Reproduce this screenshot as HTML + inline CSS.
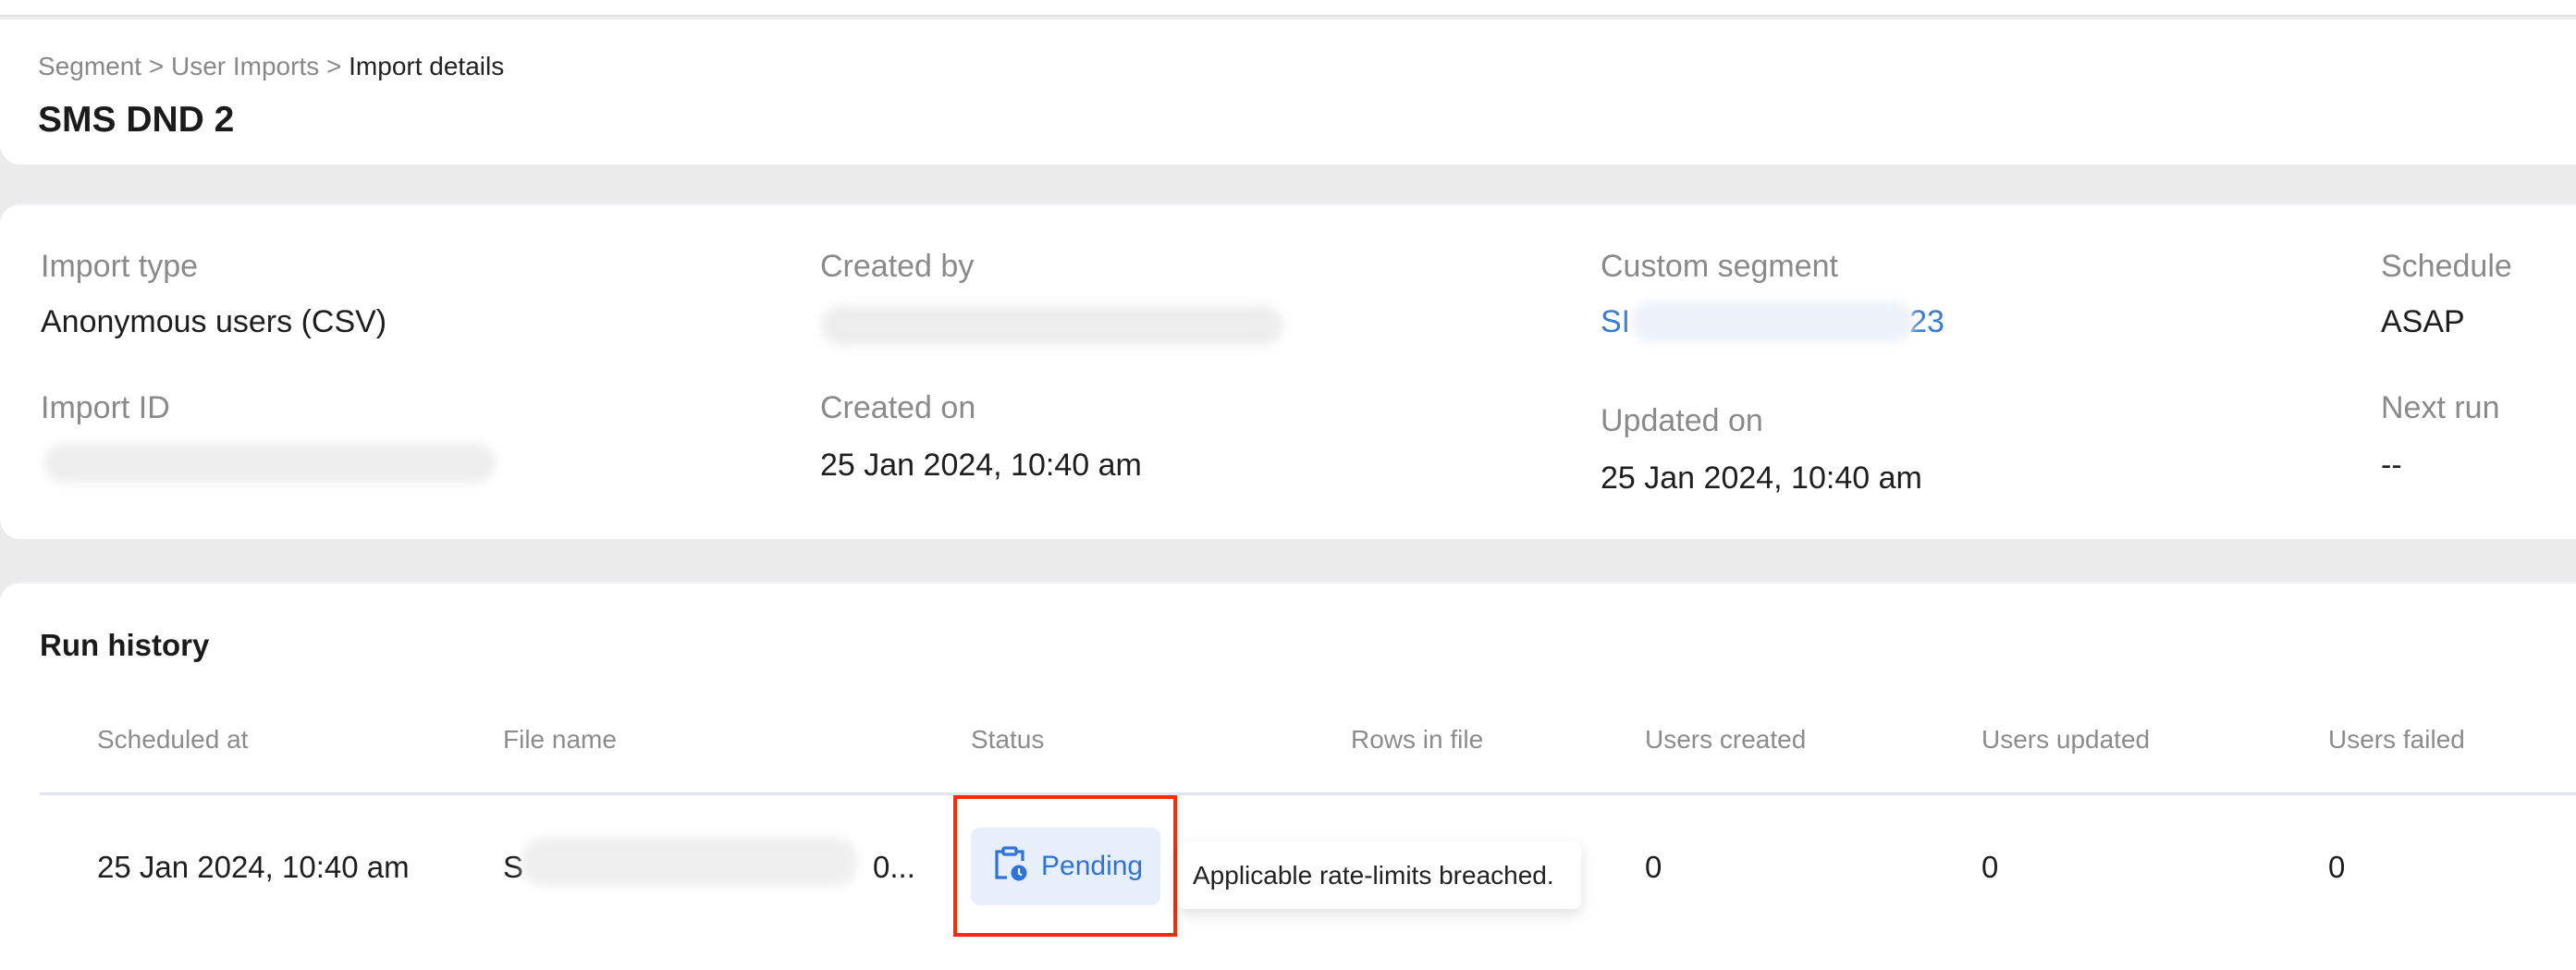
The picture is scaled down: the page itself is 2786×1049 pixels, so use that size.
<!DOCTYPE html>
<html><head><meta charset="utf-8"><style>
*{margin:0;padding:0;box-sizing:border-box}
body{width:2786px;height:1038px;background:#ebebeb;font-family:"Liberation Sans",sans-serif;position:relative;overflow:hidden}
.a{position:absolute;white-space:nowrap}
.card{position:absolute;background:#fff;left:0;right:0}
.lbl{color:#8a8a8a;font-size:34px;line-height:34px}
.val{color:#1e1e1e;font-size:34px;line-height:34px}
.th{color:#8c8c8c;font-size:28px;line-height:28px}
.td{color:#1e1e1e;font-size:33px;line-height:33px}
.blur{position:absolute;background:#eeeeee;border-radius:22px;filter:blur(5px)}
</style></head><body>
<div class="card" style="top:0;height:18px;border-bottom:2px solid #e2e2e2"></div>
<div class="card" style="top:21px;height:157px;border-radius:0 0 0 22px"></div>
<div class="a" style="left:41px;top:57px;font-size:28px;line-height:29px;color:#888">Segment &gt; User Imports &gt; <span style="color:#222">Import details</span></div>
<div class="a" style="left:41px;top:110px;font-size:39px;line-height:40px;font-weight:bold;color:#1b1b1b">SMS DND 2</div>

<div class="card" style="top:220px;height:363px;border-radius:22px 0 0 22px;border-top:2px solid #f0f2f8"></div>
<div class="a lbl" style="left:44px;top:271px">Import type</div>
<div class="a val" style="left:44px;top:331px">Anonymous users (CSV)</div>
<div class="a lbl" style="left:44px;top:424px">Import ID</div>
<div class="blur" style="left:48px;top:480px;width:488px;height:42px"></div>

<div class="a lbl" style="left:887px;top:271px">Created by</div>
<div class="blur" style="left:888px;top:330px;width:500px;height:44px"></div>
<div class="a lbl" style="left:887px;top:424px">Created on</div>
<div class="a val" style="left:887px;top:486px">25 Jan 2024, 10:40 am</div>

<div class="a lbl" style="left:1731px;top:271px">Custom segment</div>
<div class="a val" style="left:1731px;top:331px;color:#3a7bd5">SI<span style="display:inline-block;width:302px"></span>23</div>
<div class="blur" style="left:1764px;top:326px;width:306px;height:44px;background:#edf2fa"></div>
<div class="a lbl" style="left:1731px;top:438px">Updated on</div>
<div class="a val" style="left:1731px;top:500px">25 Jan 2024, 10:40 am</div>

<div class="a lbl" style="left:2575px;top:271px">Schedule</div>
<div class="a val" style="left:2575px;top:331px">ASAP</div>
<div class="a lbl" style="left:2575px;top:424px">Next run</div>
<div class="a val" style="left:2575px;top:486px">--</div>

<div class="card" style="top:629px;height:420px;border-radius:22px 0 0 0;border-top:2px solid #f0f2f8"></div>
<div class="a" style="left:43px;top:680px;font-size:33px;line-height:35px;font-weight:bold;color:#1b1b1b">Run history</div>
<div class="a th" style="left:105px;top:786px">Scheduled at</div>
<div class="a th" style="left:544px;top:786px">File name</div>
<div class="a th" style="left:1050px;top:786px">Status</div>
<div class="a th" style="left:1461px;top:786px">Rows in file</div>
<div class="a th" style="left:1779px;top:786px">Users created</div>
<div class="a th" style="left:2143px;top:786px">Users updated</div>
<div class="a th" style="left:2518px;top:786px">Users failed</div>
<div style="position:absolute;left:43px;right:0;top:857px;height:3px;background:#dfe4f0"></div>

<div class="a td" style="left:105px;top:921px">25 Jan 2024, 10:40 am</div>
<div class="a td" style="left:544px;top:921px">S<span style="display:inline-block;width:378px"></span>0...</div>
<div class="blur" style="left:565px;top:906px;width:362px;height:52px;background:#efefef"></div>

<div style="position:absolute;left:1031px;top:860px;width:242px;height:153px;border:4px solid #ff2a00"></div>
<div style="position:absolute;left:1050px;top:895px;width:205px;height:84px;background:#e8effc;border-radius:10px"></div>
<svg class="a" style="left:1074px;top:915px" width="40" height="40" viewBox="0 0 40 40" fill="none" stroke="#2f72dc" stroke-width="3.2">
<path d="M10 6H4v28h11"/><path d="M26 6h6v10"/><rect x="11" y="2" width="14" height="7" rx="1.5"/>
<circle cx="28" cy="29" r="8.5" fill="#2f72dc" stroke="none"/><path d="M28 24v5.5l3 2" stroke="#fff" stroke-width="2.2"/>
</svg>
<div class="a" style="left:1126px;top:921px;font-size:30px;line-height:32px;color:#2f72dc">Pending</div>

<div style="position:absolute;left:1273px;top:910px;width:437px;height:73px;background:#fff;border-radius:8px;box-shadow:0 6px 16px rgba(0,0,0,0.12)"></div>
<div class="a" style="left:1290px;top:932px;font-size:28px;line-height:30px;color:#222">Applicable rate-limits breached.</div>

<div class="a td" style="left:1779px;top:921px">0</div>
<div class="a td" style="left:2143px;top:921px">0</div>
<div class="a td" style="left:2518px;top:921px">0</div>
</body></html>
